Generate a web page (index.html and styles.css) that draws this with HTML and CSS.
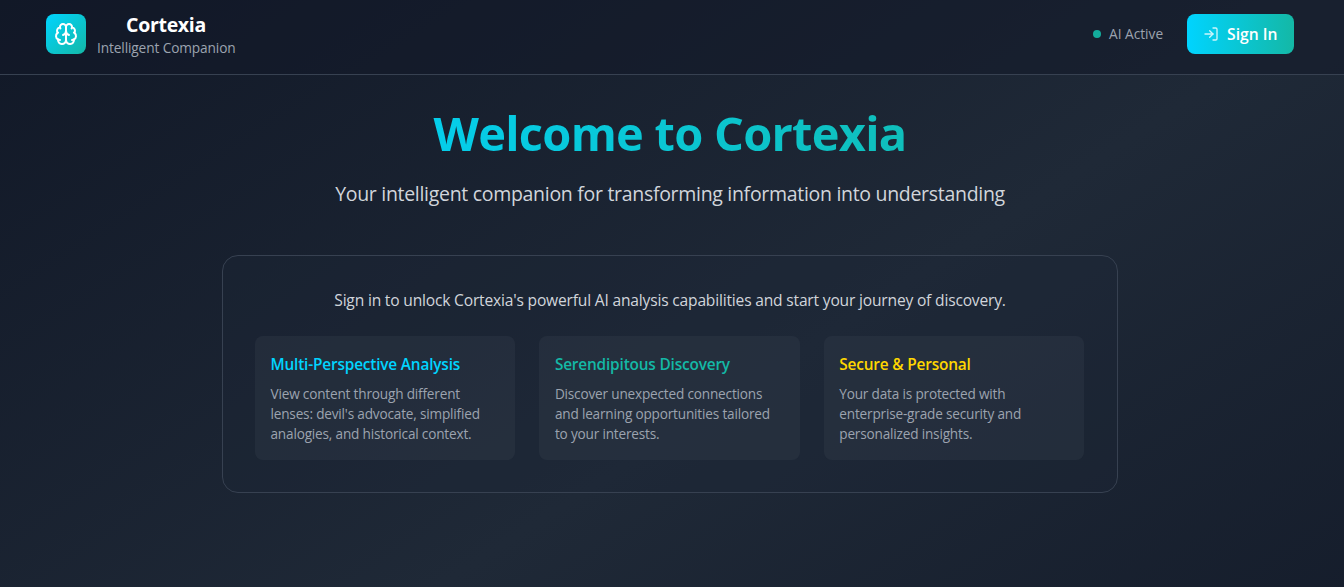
FILE: index.html
```html
<!DOCTYPE html>
<html lang="en">
<head>
<meta charset="utf-8">
<title>Cortexia</title>
<link rel="stylesheet" href="styles.css">
</head>
<body>
<div class="page">
  <header class="header">
    <div class="brand">
      <div class="logo">
        <svg viewBox="0 0 24 24" width="24" height="24" fill="none" stroke="currentColor" stroke-width="2" stroke-linecap="round" stroke-linejoin="round">
          <path d="M12 5a3 3 0 1 0-5.997.125 4 4 0 0 0-2.526 5.77 4 4 0 0 0 .556 6.588A4 4 0 1 0 12 18Z"/>
          <path d="M12 5a3 3 0 1 1 5.997.125 4 4 0 0 1 2.526 5.77 4 4 0 0 1-.556 6.588A4 4 0 1 1 12 18Z"/>
          <path d="M15 13a4.5 4.5 0 0 1-3-4 4.5 4.5 0 0 1-3 4"/>
          <path d="M17.599 6.5a3 3 0 0 0 .399-1.375"/>
          <path d="M6.003 5.125A3 3 0 0 0 6.401 6.5"/>
          <path d="M3.477 10.896a4 4 0 0 1 .585-.396"/>
          <path d="M19.938 10.5a4 4 0 0 1 .585.396"/>
          <path d="M6 18a4 4 0 0 1-1.967-.516"/>
          <path d="M19.967 17.484A4 4 0 0 1 18 18"/>
        </svg>
      </div>
      <div class="brand-text">
        <div class="brand-name">Cortexia</div>
        <div class="brand-tag">Intelligent Companion</div>
      </div>
    </div>
    <div class="actions">
      <div class="status"><span class="dot"></span><span class="status-label">AI Active</span></div>
      <button class="signin">
        <svg viewBox="0 0 24 24" width="16" height="16" fill="none" stroke="currentColor" stroke-width="2" stroke-linecap="round" stroke-linejoin="round">
          <path d="M15 3h4a2 2 0 0 1 2 2v14a2 2 0 0 1-2 2h-4"/>
          <polyline points="10 17 15 12 10 7"/>
          <line x1="15" x2="3" y1="12" y2="12"/>
        </svg>
        <span class="signin-label">Sign In</span>
      </button>
    </div>
  </header>
  <main class="main">
    <h1 class="title"><span class="title-text">Welcome to Cortexia</span></h1>
    <p class="subtitle">Your intelligent companion for transforming information into understanding</p>
    <section class="panel">
      <p class="lead">Sign in to unlock Cortexia's powerful AI analysis capabilities and start your journey of discovery.</p>
      <div class="cards">
        <article class="card">
          <h3 class="card-title cyan">Multi-Perspective Analysis</h3>
          <p class="card-text">View content through different<br>lenses: devil's advocate, simplified<br>analogies, and historical context.</p>
        </article>
        <article class="card">
          <h3 class="card-title teal">Serendipitous Discovery</h3>
          <p class="card-text">Discover unexpected connections<br>and learning opportunities tailored<br>to your interests.</p>
        </article>
        <article class="card">
          <h3 class="card-title gold">Secure &amp; Personal</h3>
          <p class="card-text">Your data is protected with<br>enterprise-grade security and<br>personalized insights.</p>
        </article>
      </div>
    </section>
  </main>
</div>
</body>
</html>
```
FILE: styles.css
```css
* { box-sizing: border-box; margin: 0; padding: 0; }
body { font-family: "Open Sans", "Noto Sans", sans-serif; color: #fff; background: #111827; }
.page {
  height: 587px;
  background: linear-gradient(to bottom right, #111827, #1f2937, #111827) 0 0 / 100% 870px no-repeat;
}
.header {
  height: 75px; padding: 0 50px 6px 46px;
  display: flex; justify-content: space-between; align-items: center;
  background: rgba(17, 24, 39, 0.5); border-bottom: 1px solid #374151;
}
.brand { display: flex; align-items: center; gap: 11px; }
.logo {
  width: 40px; height: 40px; border-radius: 8px;
  display: flex; align-items: center; justify-content: center;
  background: linear-gradient(to bottom right, #00d4ff, #14b8a6);
}
.brand-text { text-align: center; width: 138px; white-space: nowrap; }
.brand-name { font-size: 19.5px; line-height: 28px; font-weight: 700; letter-spacing: -0.3px; }
.brand-tag { font-size: 13.7px; line-height: 18px; color: #9ca3af; letter-spacing: -0.12px; }
.actions { display: flex; align-items: center; gap: 24px; }
.status { display: flex; align-items: center; gap: 8px; }
.dot { width: 8px; height: 8px; border-radius: 50%; background: #14b8a6; opacity: 0.92; }
.status-label { width: 54px; font-size: 13.7px; line-height: 20px; color: #9ca3af; white-space: nowrap; }
.signin {
  width: 107px; height: 40px; border: 0; border-radius: 8px; color: #fff;
  display: flex; align-items: center; gap: 8px; padding: 0 16px;
  font: 600 15.7px/24px "Open Sans", "Noto Sans", sans-serif; white-space: nowrap;
  background: linear-gradient(to right, #00d4ff, #14b8a6);
}
.signin svg { opacity: 0.8; flex: none; }
.main { width: 896px; margin: 0 auto; padding-top: 30px; text-align: center; transform: translateX(-2px); }
.title { font-size: 47px; line-height: 56px; font-weight: 700; letter-spacing: -0.75px; }
.title-text { display: block; color: transparent; background: linear-gradient(to right, #00d4ff, #14b8a6); background-clip: text; -webkit-background-clip: text; }
.subtitle { margin-top: 19px; font-size: 19.5px; line-height: 28px; letter-spacing: -0.3px; color: #d1d5db; white-space: nowrap; }
.panel { margin-top: 47px; height: 238px; padding: 32px; border: 1px solid #374151; border-radius: 16px; background: rgba(31, 41, 55, 0.3); }
.lead { font-size: 15.6px; line-height: 24px; letter-spacing: -0.19px; color: #d1d5db; white-space: nowrap; }
.cards { margin-top: 24px; display: grid; grid-template-columns: repeat(3, 260.4px); gap: 24px; text-align: left; }
.card { height: 124px; padding: 16px 15.5px; border-radius: 8px; background: rgba(55, 65, 81, 0.3); white-space: nowrap; }
.card-title { font-size: 15.4px; line-height: 26px; font-weight: 600; letter-spacing: -0.18px; }
.card-text { margin-top: 6px; font-size: 13.6px; line-height: 20px; letter-spacing: -0.18px; color: #9ca3af; }
.cyan { color: #00d4ff; }
.teal { color: #14b8a6; }
.gold { color: #ffd700; }
```
